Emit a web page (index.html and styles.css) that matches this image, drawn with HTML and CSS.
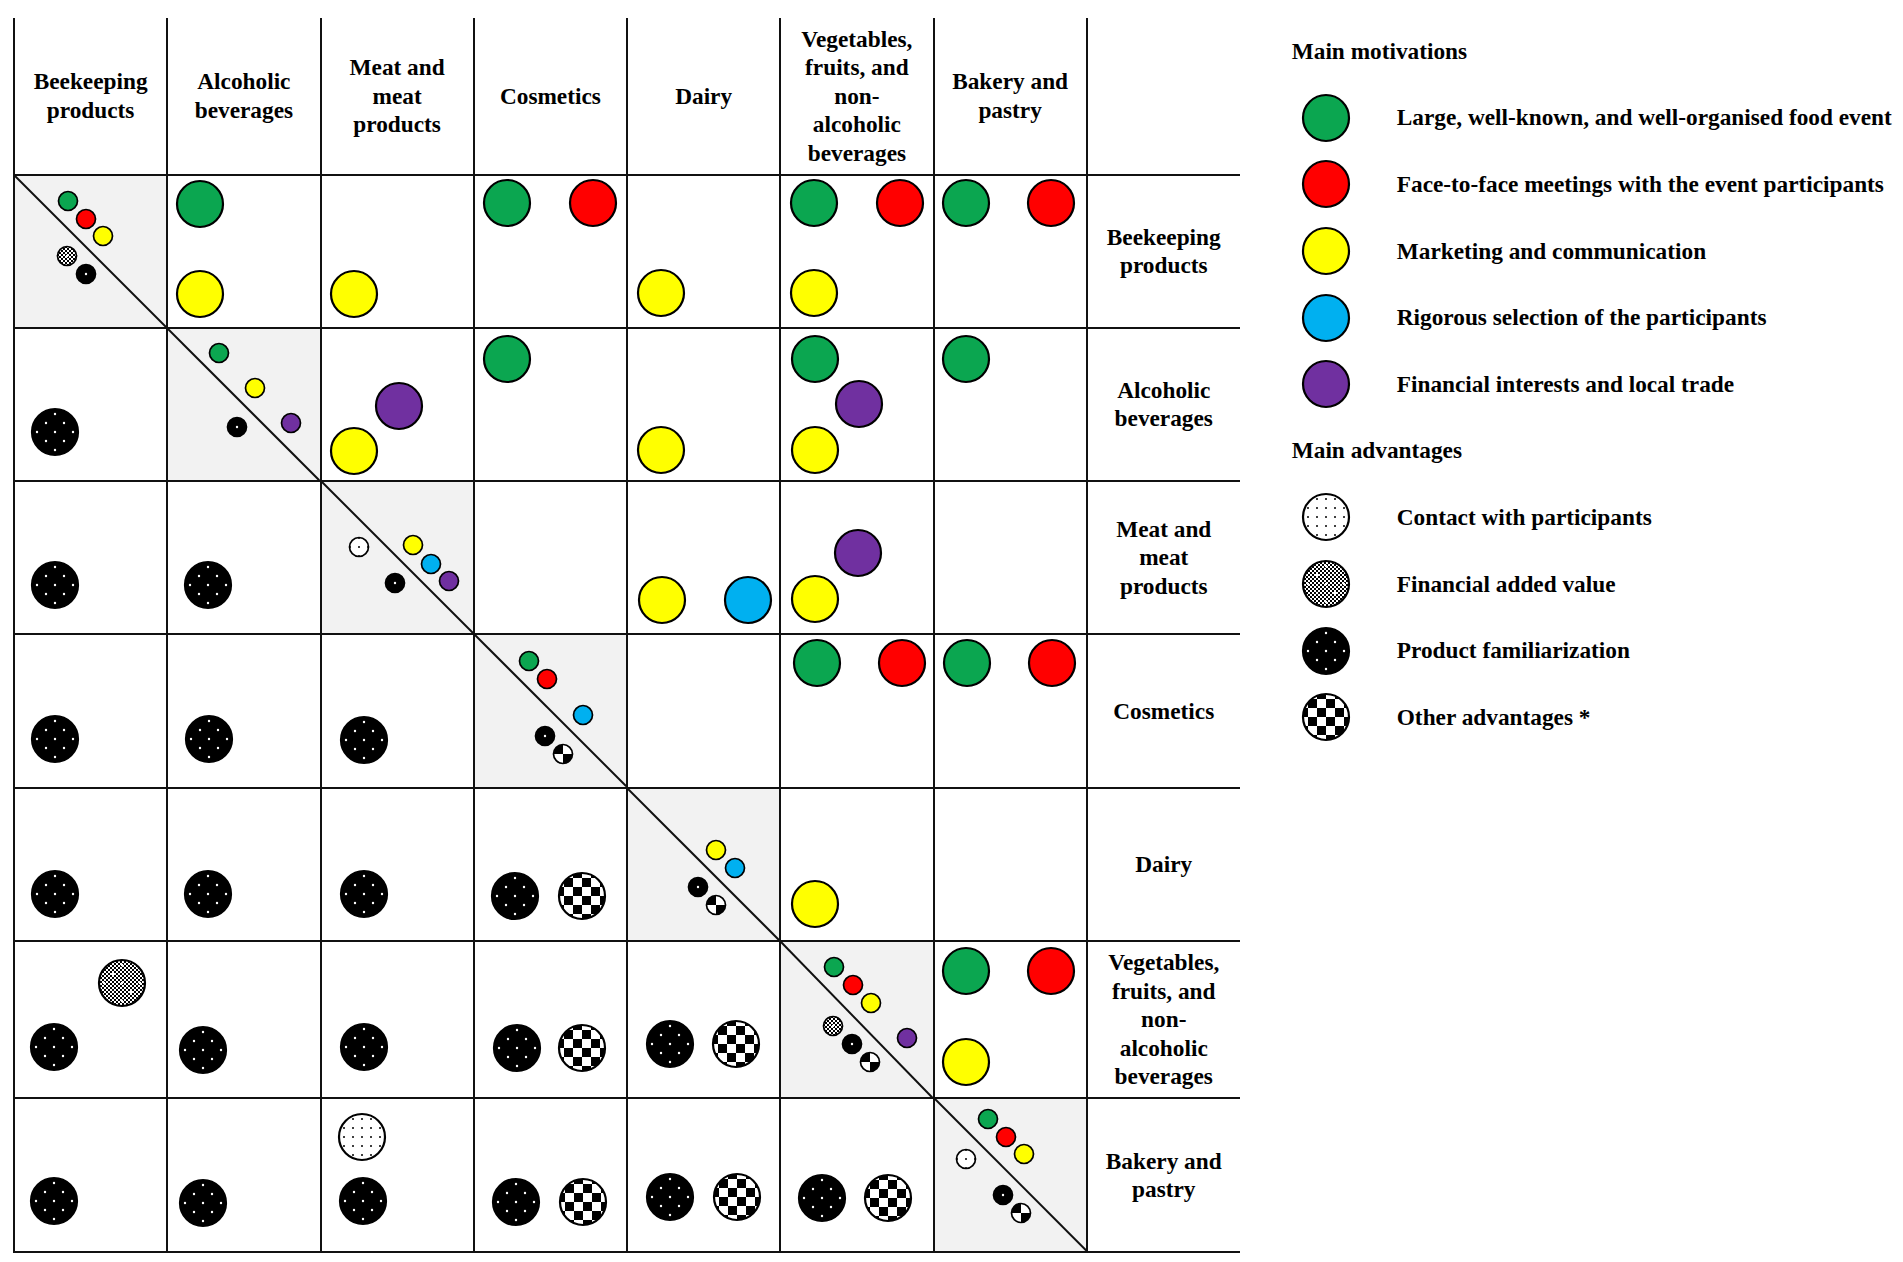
FILE: index.html
```html
<!DOCTYPE html>
<html lang="en">
<head>
    <meta charset="UTF-8">
    <meta name="viewport" content="width=device-width, initial-scale=1.0">
    <title>Food event motivations and advantages</title>
    <link rel="stylesheet" href="styles.css">
</head>
<body>
    <!-- shared markers and fill patterns -->
    <svg class="defs" width="0" height="0" aria-hidden="true">
        <defs>
            <pattern id="p-wdots" width="18" height="18" patternUnits="userSpaceOnUse">
                <circle cx="0" cy="0" r="1.2" fill="#fff"/>
                <circle cx="18" cy="0" r="1.2" fill="#fff"/>
                <circle cx="0" cy="18" r="1.2" fill="#fff"/>
                <circle cx="18" cy="18" r="1.2" fill="#fff"/>
                <circle cx="9" cy="9" r="1.2" fill="#fff"/>
            </pattern>
            <pattern id="p-kdots" width="9" height="9" patternUnits="userSpaceOnUse">
                <rect width="9" height="9" fill="#fff"/>
                <circle cx="0" cy="0" r="1" fill="#000"/>
                <circle cx="9" cy="0" r="1" fill="#000"/>
                <circle cx="0" cy="9" r="1" fill="#000"/>
                <circle cx="9" cy="9" r="1" fill="#000"/>
            </pattern>
            <pattern id="p-fine" width="4" height="4" patternUnits="userSpaceOnUse">
                <rect width="4" height="4" fill="#fff"/>
                <rect width="2" height="2" fill="#000"/>
                <rect x="2" y="2" width="2" height="2" fill="#000"/>
            </pattern>
            <pattern id="p-check" width="18" height="18" patternUnits="userSpaceOnUse">
                <rect width="18" height="18" fill="#fff"/>
                <rect width="9" height="9" fill="#000"/>
                <rect x="9" y="9" width="9" height="9" fill="#000"/>
            </pattern>

            <!-- large markers -->
            <circle id="mg" r="23" class="mk green"/>
            <circle id="mr" r="23" class="mk red"/>
            <circle id="my" r="23" class="mk yellow"/>
            <circle id="mb" r="23" class="mk blue"/>
            <circle id="mp" r="23" class="mk purple"/>
            <circle id="ac" r="23" class="mk contact"/>
            <g id="ag"><circle r="23" class="fine"/><circle r="23" class="mk wdots"/></g>
            <g id="af"><circle r="23" class="black"/><circle r="23" class="mk wdots"/></g>
            <circle id="ax" r="23" class="mk check"/>

            <!-- small markers (diagonal) -->
            <circle id="sg" r="9.5" class="sm green"/>
            <circle id="sr" r="9.5" class="sm red"/>
            <circle id="sy" r="9.5" class="sm yellow"/>
            <circle id="sb" r="9.5" class="sm blue"/>
            <circle id="sp" r="9.5" class="sm purple"/>
            <circle id="sc" r="9.5" class="sm contact"/>
            <g id="sgr"><circle r="9.5" class="fine"/><circle r="9.5" class="sm wdots"/></g>
            <g id="sf"><circle r="9.5" class="black"/><circle r="9.5" class="sm wdots"/></g>
            <circle id="sx" r="9.5" class="sm check"/>
        </defs>
    </svg>

    <div class="matrix">
        <div class="head">Beekeeping<br>products</div>
        <div class="head">Alcoholic<br>beverages</div>
        <div class="head">Meat and<br>meat<br>products</div>
        <div class="head">Cosmetics</div>
        <div class="head">Dairy</div>
        <div class="head">Vegetables,<br>fruits, and<br>non-<br>alcoholic<br>beverages</div>
        <div class="head">Bakery and<br>pastry</div>
        <div class="head"></div>

        <!-- Beekeeping products -->
        <div class="cell diag"><svg class="dots"><line class="slash" x1="0" y1="0" x2="100%" y2="100%"/>
            <use href="#sg" x="53" y="25"/><use href="#sr" x="71" y="43"/><use href="#sy" x="88" y="60"/>
            <use href="#sgr" x="52" y="80"/><use href="#sf" x="71" y="98"/></svg></div>
        <div class="cell"><svg class="dots"><use href="#mg" x="32" y="28"/><use href="#my" x="32" y="118"/></svg></div>
        <div class="cell"><svg class="dots"><use href="#my" x="32" y="118"/></svg></div>
        <div class="cell"><svg class="dots"><use href="#mg" x="32" y="27"/><use href="#mr" x="118" y="27"/></svg></div>
        <div class="cell"><svg class="dots"><use href="#my" x="33" y="117"/></svg></div>
        <div class="cell"><svg class="dots"><use href="#mg" x="33" y="27"/><use href="#mr" x="119" y="27"/><use href="#my" x="33" y="117"/></svg></div>
        <div class="cell"><svg class="dots"><use href="#mg" x="31" y="27"/><use href="#mr" x="116" y="27"/></svg></div>
        <div class="label">Beekeeping<br>products</div>

        <!-- Alcoholic beverages -->
        <div class="cell"><svg class="dots"><use href="#af" x="40" y="103"/></svg></div>
        <div class="cell diag"><svg class="dots"><line class="slash" x1="0" y1="0" x2="100%" y2="100%"/>
            <use href="#sg" x="51" y="24"/><use href="#sy" x="87" y="59"/><use href="#sp" x="123" y="94"/>
            <use href="#sf" x="69" y="98"/></svg></div>
        <div class="cell"><svg class="dots"><use href="#mp" x="77" y="77"/><use href="#my" x="32" y="122"/></svg></div>
        <div class="cell"><svg class="dots"><use href="#mg" x="32" y="30"/></svg></div>
        <div class="cell"><svg class="dots"><use href="#my" x="33" y="121"/></svg></div>
        <div class="cell"><svg class="dots"><use href="#mg" x="34" y="30"/><use href="#mp" x="78" y="75"/><use href="#my" x="34" y="121"/></svg></div>
        <div class="cell"><svg class="dots"><use href="#mg" x="31" y="30"/></svg></div>
        <div class="label">Alcoholic<br>beverages</div>

        <!-- Meat and meat products -->
        <div class="cell"><svg class="dots"><use href="#af" x="40" y="103"/></svg></div>
        <div class="cell"><svg class="dots"><use href="#af" x="40" y="103"/></svg></div>
        <div class="cell diag"><svg class="dots"><line class="slash" x1="0" y1="0" x2="100%" y2="100%"/>
            <use href="#sc" x="37" y="65"/><use href="#sy" x="91" y="63"/><use href="#sb" x="109" y="82"/>
            <use href="#sp" x="127" y="99"/><use href="#sf" x="73" y="101"/></svg></div>
        <div class="cell"></div>
        <div class="cell"><svg class="dots"><use href="#my" x="34" y="118"/><use href="#mb" x="120" y="118"/></svg></div>
        <div class="cell"><svg class="dots"><use href="#mp" x="77" y="71"/><use href="#my" x="34" y="117"/></svg></div>
        <div class="cell"></div>
        <div class="label">Meat and<br>meat<br>products</div>

        <!-- Cosmetics -->
        <div class="cell"><svg class="dots"><use href="#af" x="40" y="104"/></svg></div>
        <div class="cell"><svg class="dots"><use href="#af" x="41" y="104"/></svg></div>
        <div class="cell"><svg class="dots"><use href="#af" x="42" y="105"/></svg></div>
        <div class="cell diag"><svg class="dots"><line class="slash" x1="0" y1="0" x2="100%" y2="100%"/>
            <use href="#sg" x="54" y="26"/><use href="#sr" x="72" y="44"/><use href="#sb" x="108" y="80"/>
            <use href="#sf" x="70" y="101"/><use href="#sx" x="88" y="119"/></svg></div>
        <div class="cell"></div>
        <div class="cell"><svg class="dots"><use href="#mg" x="36" y="28"/><use href="#mr" x="121" y="28"/></svg></div>
        <div class="cell"><svg class="dots"><use href="#mg" x="32" y="28"/><use href="#mr" x="117" y="28"/></svg></div>
        <div class="label">Cosmetics</div>

        <!-- Dairy -->
        <div class="cell"><svg class="dots"><use href="#af" x="40" y="105"/></svg></div>
        <div class="cell"><svg class="dots"><use href="#af" x="40" y="105"/></svg></div>
        <div class="cell"><svg class="dots"><use href="#af" x="42" y="105"/></svg></div>
        <div class="cell"><svg class="dots"><use href="#af" x="40" y="107"/><use href="#ax" x="107" y="107"/></svg></div>
        <div class="cell diag"><svg class="dots"><line class="slash" x1="0" y1="0" x2="100%" y2="100%"/>
            <use href="#sy" x="88" y="61"/><use href="#sb" x="107" y="79"/>
            <use href="#sf" x="70" y="98"/><use href="#sx" x="88" y="116"/></svg></div>
        <div class="cell"><svg class="dots"><use href="#my" x="34" y="115"/></svg></div>
        <div class="cell"></div>
        <div class="label">Dairy</div>

        <!-- Vegetables, fruits, and non-alcoholic beverages -->
        <div class="cell"><svg class="dots"><use href="#ag" x="107" y="41"/><use href="#af" x="39" y="105"/></svg></div>
        <div class="cell"><svg class="dots"><use href="#af" x="35" y="108"/></svg></div>
        <div class="cell"><svg class="dots"><use href="#af" x="42" y="105"/></svg></div>
        <div class="cell"><svg class="dots"><use href="#af" x="42" y="106"/><use href="#ax" x="107" y="106"/></svg></div>
        <div class="cell"><svg class="dots"><use href="#af" x="42" y="102"/><use href="#ax" x="108" y="102"/></svg></div>
        <div class="cell diag"><svg class="dots"><line class="slash" x1="0" y1="0" x2="100%" y2="100%"/>
            <use href="#sg" x="53" y="25"/><use href="#sr" x="72" y="43"/><use href="#sy" x="90" y="61"/>
            <use href="#sp" x="126" y="96"/><use href="#sgr" x="52" y="84"/><use href="#sf" x="71" y="102"/>
            <use href="#sx" x="89" y="120"/></svg></div>
        <div class="cell"><svg class="dots"><use href="#mg" x="31" y="29"/><use href="#mr" x="116" y="29"/><use href="#my" x="31" y="120"/></svg></div>
        <div class="label">Vegetables,<br>fruits, and<br>non-<br>alcoholic<br>beverages</div>

        <!-- Bakery and pastry -->
        <div class="cell"><svg class="dots"><use href="#af" x="39" y="102"/></svg></div>
        <div class="cell"><svg class="dots"><use href="#af" x="35" y="104"/></svg></div>
        <div class="cell"><svg class="dots"><use href="#ac" x="40" y="38"/><use href="#af" x="41" y="102"/></svg></div>
        <div class="cell"><svg class="dots"><use href="#af" x="41" y="103"/><use href="#ax" x="108" y="103"/></svg></div>
        <div class="cell"><svg class="dots"><use href="#af" x="42" y="98"/><use href="#ax" x="109" y="98"/></svg></div>
        <div class="cell"><svg class="dots"><use href="#af" x="41" y="99"/><use href="#ax" x="107" y="99"/></svg></div>
        <div class="cell diag"><svg class="dots"><line class="slash" x1="0" y1="0" x2="100%" y2="100%"/>
            <use href="#sg" x="53" y="20"/><use href="#sr" x="71" y="38"/><use href="#sy" x="89" y="55"/>
            <use href="#sc" x="31" y="60"/><use href="#sf" x="68" y="96"/><use href="#sx" x="86" y="114"/></svg></div>
        <div class="label">Bakery and<br>pastry</div>
    </div>

    <div class="legend">
        <div class="title">Main motivations</div>
        <div class="item"><svg viewBox="-24 -24 48 48"><use href="#mg"/></svg>Large, well-known, and well-organised food event</div>
        <div class="item"><svg viewBox="-24 -24 48 48"><use href="#mr"/></svg>Face-to-face meetings with the event participants</div>
        <div class="item"><svg viewBox="-24 -24 48 48"><use href="#my"/></svg>Marketing and communication</div>
        <div class="item"><svg viewBox="-24 -24 48 48"><use href="#mb"/></svg>Rigorous selection of the participants</div>
        <div class="item"><svg viewBox="-24 -24 48 48"><use href="#mp"/></svg>Financial interests and local trade</div>
        <div class="title">Main advantages</div>
        <div class="item"><svg viewBox="-24 -24 48 48"><use href="#ac"/></svg>Contact with participants</div>
        <div class="item"><svg viewBox="-24 -24 48 48"><use href="#ag"/></svg>Financial added value</div>
        <div class="item"><svg viewBox="-24 -24 48 48"><use href="#af"/></svg>Product familiarization</div>
        <div class="item"><svg viewBox="-24 -24 48 48"><use href="#ax"/></svg>Other advantages *</div>
    </div>
</body>
</html>
```

FILE: styles.css
```css
body {
    margin: 0;
    background: #fff;
    color: #000;
    font-family: "Liberation Serif", "Times New Roman", serif;
    font-weight: 700;
    font-size: 23.3px;
    display: flex;
    align-items: flex-start;
}

.defs {
    display: block;
    width: 0;
    height: 0;
}

/* matrix */
.matrix {
    display: grid;
    grid-template-columns: repeat(7, 153.25px) 154px;
    grid-template-rows: 157.5px repeat(5, 153.25px) 157.5px 153.5px;
    margin: 18px 0 0 13px;
}
.matrix > div {
    border-left: 2px solid #111;
    border-bottom: 2px solid #111;
}
.head,
.label {
    display: flex;
    align-items: center;
    justify-content: center;
    text-align: center;
    line-height: 28.5px;
}
.diag {
    background: #f2f2f2;
}
.dots {
    display: block;
    width: 100%;
    height: 100%;
    overflow: visible;
}
.slash {
    stroke: #111;
    stroke-width: 2;
}

/* markers */
.mk {
    stroke: #000;
    stroke-width: 2.2;
}
.sm {
    stroke: #000;
    stroke-width: 1.7;
}
.green { fill: #0ba650; }
.red { fill: #ff0000; }
.yellow { fill: #ffff00; }
.blue { fill: #00b0f0; }
.purple { fill: #7030a0; }
.black { fill: #000; }
.contact { fill: url(#p-kdots); }
.fine { fill: url(#p-fine); }
.wdots { fill: url(#p-wdots); }
.check { fill: url(#p-check); }

/* legend */
.legend {
    margin: 18px 0 0 52px;
}
.title,
.item {
    height: 66.6px;
    display: flex;
    align-items: center;
    white-space: nowrap;
}
.item svg {
    width: 48px;
    height: 48px;
    margin: 0 47px 0 10px;
    overflow: visible;
}
```
